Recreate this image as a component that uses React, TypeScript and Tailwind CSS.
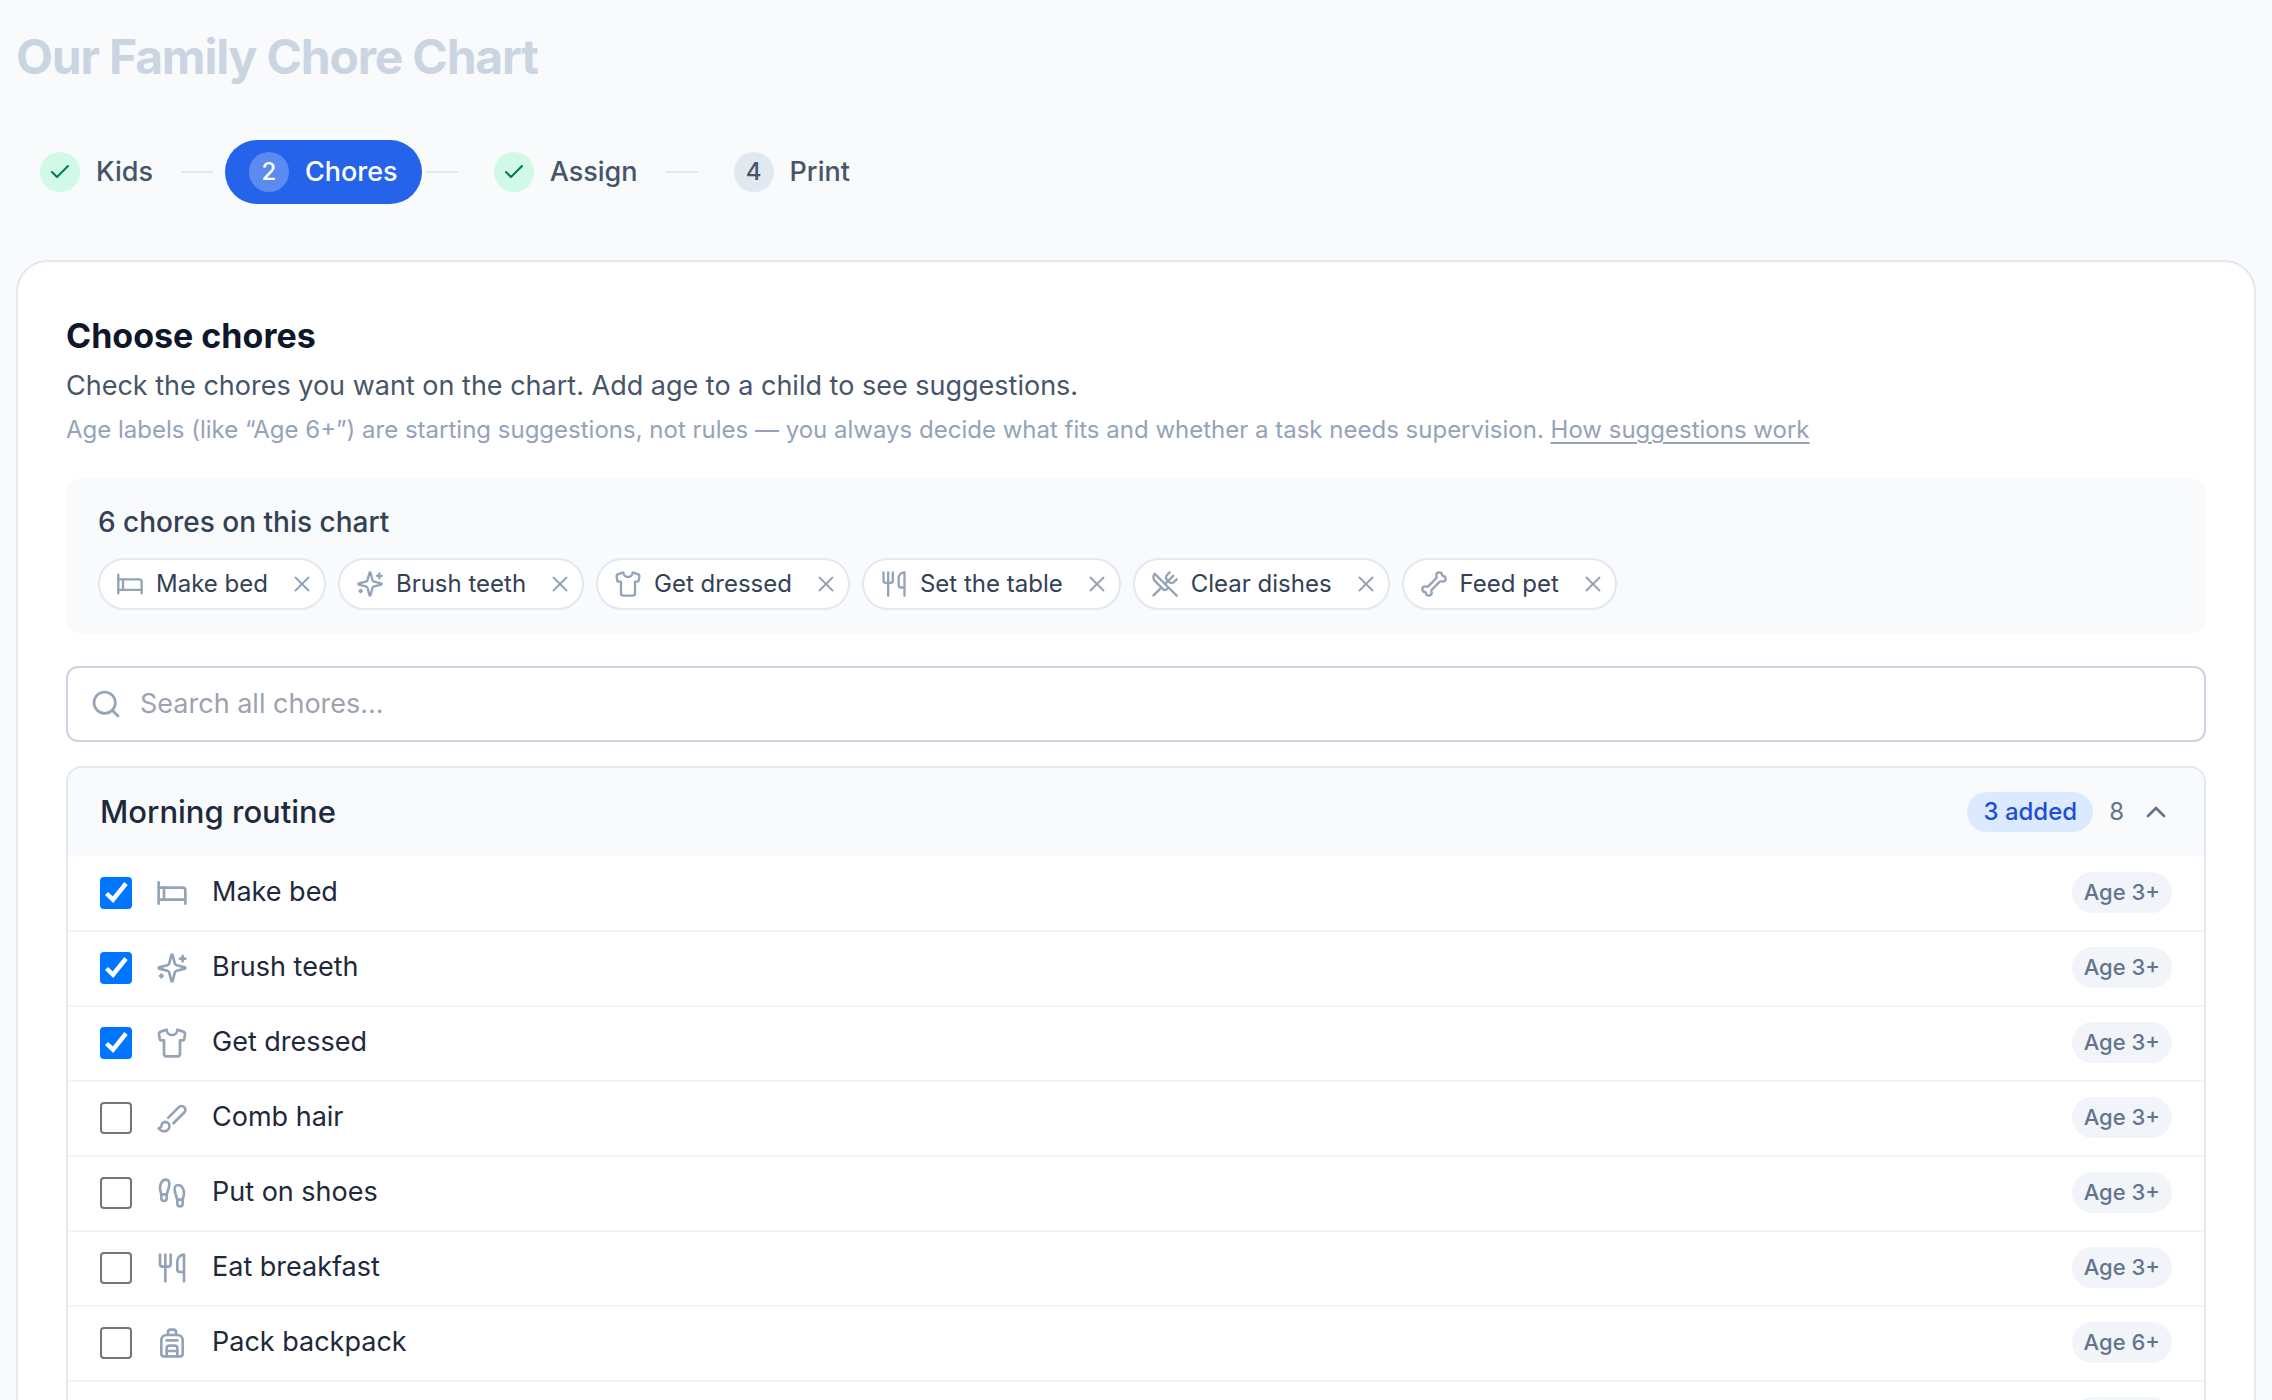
import React, { useState } from 'react';
import {
  Backpack,
  Bed,
  Bone,
  Check,
  ChevronUp,
  Droplets,
  Footprints,
  Search,
  Shirt,
  Utensils,
  UtensilsCrossed,
  X,
} from 'lucide-react';

interface IconProps {
  size?: number;
  className?: string;
}

interface Step {
  label: string;
  state: 'done' | 'active' | 'todo';
}

interface Chore {
  name: string;
  icon: React.ComponentType<IconProps>;
  age?: number;
}

const LineIcon: React.FC<IconProps & { paths: string[] }> = ({ size = 24, className, paths }) => (
  <svg
    width={size}
    height={size}
    viewBox="0 0 24 24"
    fill="none"
    stroke="currentColor"
    strokeWidth="2"
    strokeLinecap="round"
    strokeLinejoin="round"
    aria-hidden="true"
    className={className}
  >
    {paths.map((d) => (
      <path key={d} d={d} />
    ))}
  </svg>
);

const Sparkles: React.FC<IconProps> = (props) => (
  <LineIcon
    {...props}
    paths={[
      'M9.937 15.5A2 2 0 0 0 8.5 14.063l-6.135-1.582a.5.5 0 0 1 0-.962L8.5 9.936A2 2 0 0 0 9.937 8.5l1.582-6.135a.5.5 0 0 1 .963 0L14.063 8.5A2 2 0 0 0 15.5 9.937l6.135 1.581a.5.5 0 0 1 0 .964L15.5 14.063a2 2 0 0 0-1.437 1.437l-1.582 6.135a.5.5 0 0 1-.963 0z',
      'M20 3v4',
      'M22 5h-4',
      'M4 17v2',
      'M5 18H3',
    ]}
  />
);

const Brush: React.FC<IconProps> = (props) => (
  <LineIcon
    {...props}
    paths={[
      'm9.06 11.9 8.07-8.06a2.85 2.85 0 1 1 4.03 4.03l-8.06 8.08',
      'M7.07 14.94c-1.66 0-3 1.35-3 3.02 0 1.33-2.5 1.52-2 2.02 1.08 1.1 2.49 2.02 4 2.02 2.2 0 4-1.8 4-4.04a3.01 3.01 0 0 0-3-3.02z',
    ]}
  />
);

const STEPS: Step[] = [
  { label: 'Kids', state: 'done' },
  { label: 'Chores', state: 'active' },
  { label: 'Assign', state: 'done' },
  { label: 'Print', state: 'todo' },
];

const MORNING: Chore[] = [
  { name: 'Make bed', icon: Bed, age: 3 },
  { name: 'Brush teeth', icon: Sparkles, age: 3 },
  { name: 'Get dressed', icon: Shirt, age: 3 },
  { name: 'Comb hair', icon: Brush, age: 3 },
  { name: 'Put on shoes', icon: Footprints, age: 3 },
  { name: 'Eat breakfast', icon: Utensils, age: 3 },
  { name: 'Pack backpack', icon: Backpack, age: 6 },
  { name: 'Wash face', icon: Droplets, age: 3 },
];

const OTHER: Chore[] = [
  { name: 'Set the table', icon: Utensils },
  { name: 'Clear dishes', icon: UtensilsCrossed },
  { name: 'Feed pet', icon: Bone },
];

const ALL = [...MORNING, ...OTHER];

const circleStyles = {
  done: 'bg-[#d0fae5] text-[#007a55]',
  active: 'bg-white/25 text-white',
  todo: 'bg-[#e2e8f0] text-[#475569]',
};

const StepNav: React.FC = () => (
  <nav aria-label="Steps" className="mt-10">
    <ol className="flex items-center">
      {STEPS.map((step, i) => (
        <li key={step.label} className="flex items-center">
          {i > 0 && <span className="ml-1 mr-3 h-0.5 w-8 bg-[#e2e8f0]" />}
          <button
            type="button"
            aria-current={step.state === 'active' ? 'step' : undefined}
            className={`flex h-16 items-center gap-4 rounded-full px-6 text-[27px] font-medium ${
              step.state === 'active' ? 'bg-[#2563eb] text-white' : 'text-[#475569]'
            }`}
          >
            <span
              className={`flex size-10 items-center justify-center rounded-full text-2xl ${circleStyles[step.state]}`}
            >
              {step.state === 'done' ? <Check size={24} /> : i + 1}
            </span>
            {step.label}
          </button>
        </li>
      ))}
    </ol>
  </nav>
);

const Chip: React.FC<{ chore: Chore; onRemove: () => void }> = ({ chore, onRemove }) => {
  const Icon = chore.icon;
  return (
    <li className="flex h-[52px] items-center gap-3 rounded-full border-2 border-[#e2e8f0] bg-white pl-4 pr-2 text-2xl text-[#334155]">
      <Icon size={28} className="text-[#94a3b8]" />
      {chore.name}
      <button
        type="button"
        aria-label={`Remove ${chore.name}`}
        onClick={onRemove}
        className="ml-2 flex size-7 items-center justify-center text-[#94a3b8]"
      >
        <X size={26} strokeWidth={1.75} />
      </button>
    </li>
  );
};

const ChoreRow: React.FC<{ chore: Chore; checked: boolean; onToggle: () => void }> = ({
  chore,
  checked,
  onToggle,
}) => {
  const Icon = chore.icon;
  return (
    <li className="border-b-2 border-[#f1f5f9]">
      <label className="flex h-[73px] items-center px-8 pb-0.5">
        <span className="relative flex size-8">
          <input
            type="checkbox"
            checked={checked}
            onChange={onToggle}
            className="size-8 appearance-none rounded-sm border-2 border-[#767676] bg-white checked:border-[#0075ff] checked:bg-[#0075ff]"
          />
          {checked && (
            <svg viewBox="0 0 32 32" className="pointer-events-none absolute inset-0" fill="none">
              <path d="M6.5 16.5l6.5 6.2L26 6.5" stroke="white" strokeWidth="4.4" />
            </svg>
          )}
        </span>
        <Icon size={32} className="ml-6 text-[#94a3b8]" />
        <span className="ml-6 flex-1 text-[27px] text-[#1e293b]">{chore.name}</span>
        <span className="flex h-[41px] items-center rounded-full bg-[#f1f5f9] px-3 text-[22px] font-medium text-[#64748b]">
          Age {chore.age}+
        </span>
      </label>
    </li>
  );
};

export default function App() {
  const [selected, setSelected] = useState([
    'Make bed',
    'Brush teeth',
    'Get dressed',
    'Set the table',
    'Clear dishes',
    'Feed pet',
  ]);

  const toggle = (name: string) =>
    setSelected((prev) => (prev.includes(name) ? prev.filter((n) => n !== name) : [...prev, name]));

  const added = MORNING.filter((c) => selected.includes(c.name)).length;

  return (
    <main className="h-screen overflow-hidden bg-[#f8fafc] px-4 pt-4 font-['Inter',sans-serif]">
      <input
        type="text"
        aria-label="Chart title"
        placeholder="Our Family Chore Chart"
        className="block h-[84px] w-full bg-transparent pb-1 text-5xl font-bold tracking-tight outline-none placeholder:text-[#cbd5e1]"
      />
      <StepNav />

      <section className="mt-14 rounded-[32px] border-2 border-[#e2e8f0] bg-white p-12">
        <h2 className="text-[34px] font-bold leading-[52px] text-[#0f172a]">Choose chores</h2>
        <p className="mt-1 text-[27px] leading-10 text-[#475569]">
          Check the chores you want on the chart. Add age to a child to see suggestions.
        </p>
        <p className="mt-2 text-2xl text-[#94a3b8]">
          Age labels (like “Age 6+”) are starting suggestions, not rules — you always decide what fits and whether a
          task needs supervision.{' '}
          <a href="#suggestions" className="underline decoration-2 underline-offset-4">
            How suggestions work
          </a>
        </p>

        <div className="mt-8 rounded-2xl bg-[#f8fafc] px-8 py-6">
          <h3 className="text-[28px] font-medium leading-10 text-[#334155]">
            {selected.length} chores on this chart
          </h3>
          <ul className="mt-4 flex flex-wrap gap-3">
            {ALL.filter((c) => selected.includes(c.name)).map((c) => (
              <Chip key={c.name} chore={c} onRemove={() => toggle(c.name)} />
            ))}
          </ul>
        </div>

        <label className="mt-8 flex h-[76px] items-center gap-[18px] rounded-xl border-2 border-[#cbd5e1] px-[22px]">
          <Search size={32} className="text-[#94a3b8]" />
          <input
            type="search"
            aria-label="Search all chores"
            placeholder="Search all chores..."
            className="flex-1 text-[27px] outline-none placeholder:text-[#9ca3af]"
          />
        </label>

        <div className="mt-6 overflow-hidden rounded-2xl border-2 border-[#e2e8f0]">
          <button type="button" className="flex h-[88px] w-full items-center bg-[#f8fafc] px-8">
            <span className="flex-1 text-left text-[31px] font-medium text-[#1e293b]">Morning routine</span>
            <span className="flex h-10 items-center rounded-full bg-[#dbeafe] px-4 text-2xl font-medium text-[#1d4ed8]">
              {added} added
            </span>
            <span className="ml-4 text-2xl text-[#64748b]">{MORNING.length}</span>
            <ChevronUp size={32} className="ml-4 text-[#64748b]" />
          </button>
          <ul className="pt-px">
            {MORNING.map((c) => (
              <ChoreRow key={c.name} chore={c} checked={selected.includes(c.name)} onToggle={() => toggle(c.name)} />
            ))}
          </ul>
        </div>
      </section>
    </main>
  );
}
